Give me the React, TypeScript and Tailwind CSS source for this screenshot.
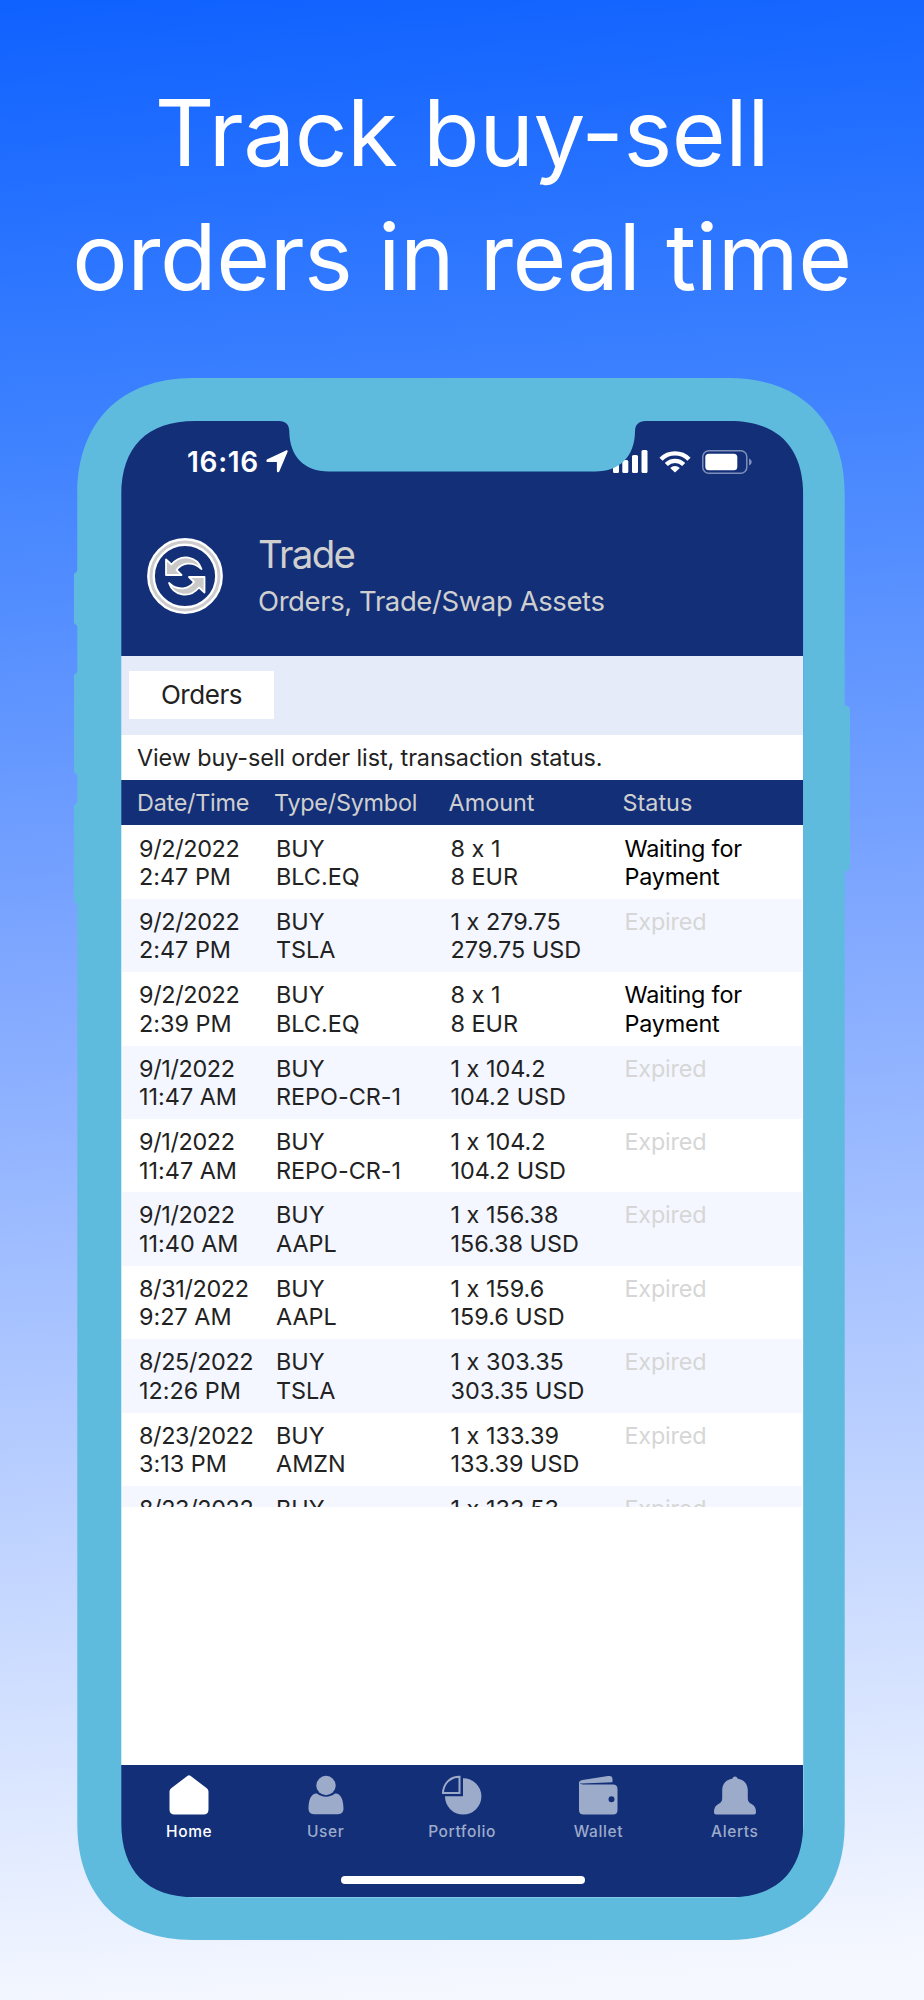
import React from 'react';

type Order = {
  date: string;
  time: string;
  side: string;
  symbol: string;
  qty: string;
  total: string;
  status: string;
};

const orders: Order[] = [
  { date: '9/2/2022', time: '2:47 PM', side: 'BUY', symbol: 'BLC.EQ', qty: '8 x 1', total: '8 EUR', status: 'Waiting for Payment' },
  { date: '9/2/2022', time: '2:47 PM', side: 'BUY', symbol: 'TSLA', qty: '1 x 279.75', total: '279.75 USD', status: 'Expired' },
  { date: '9/2/2022', time: '2:39 PM', side: 'BUY', symbol: 'BLC.EQ', qty: '8 x 1', total: '8 EUR', status: 'Waiting for Payment' },
  { date: '9/1/2022', time: '11:47 AM', side: 'BUY', symbol: 'REPO-CR-1', qty: '1 x 104.2', total: '104.2 USD', status: 'Expired' },
  { date: '9/1/2022', time: '11:47 AM', side: 'BUY', symbol: 'REPO-CR-1', qty: '1 x 104.2', total: '104.2 USD', status: 'Expired' },
  { date: '9/1/2022', time: '11:40 AM', side: 'BUY', symbol: 'AAPL', qty: '1 x 156.38', total: '156.38 USD', status: 'Expired' },
  { date: '8/31/2022', time: '9:27 AM', side: 'BUY', symbol: 'AAPL', qty: '1 x 159.6', total: '159.6 USD', status: 'Expired' },
  { date: '8/25/2022', time: '12:26 PM', side: 'BUY', symbol: 'TSLA', qty: '1 x 303.35', total: '303.35 USD', status: 'Expired' },
  { date: '8/23/2022', time: '3:13 PM', side: 'BUY', symbol: 'AMZN', qty: '1 x 133.39', total: '133.39 USD', status: 'Expired' },
  { date: '8/23/2022', time: '', side: 'BUY', symbol: '', qty: '1 x 133.53', total: '', status: 'Expired' },
];

const columns = 'grid grid-cols-[137px_174.5px_174px_1fr]';

/* Device shell: outer body with side buttons, and a screen cut-out with the notch. */
function PhoneFrame() {
  return (
    <svg className="pointer-events-none absolute -left-[5px] top-0" width="780" height="1562" viewBox="72 378 780 1562" aria-hidden="true">
      <g fill="#5fbbdd">
        <path d="M78 570.5 74 574v49l4 3.500zM78 671.500 74 675v97l4 3.500zM78 802 74 805.500v96l4 3.500z" />
        <path d="M844 705.500h1.500q4.500.5 4.500 5v156q0 4.500-4.500 5H844z" />
        <path
          fillRule="evenodd"
          d="M77.300 494C77.300 422 121 378 193 378H729C801 378 844.700 422 844.700 494V1824C844.700 1896 801 1940 729 1940H193C121 1940 77.300 1896 77.300 1824Z
             M121.300 495C121.300 447 147 421 195 421H279C285.500 421 289.300 424.500 289.300 431.500C289.500 456 304 471.500 329 471.500H595C620 471.500 634.800 456 635 431.500C635 424.500 639 421 645.500 421H729.500C777.500 421 803.300 447 803.300 495V1823C803.300 1871 777.500 1897.300 729.500 1897.300H195C147 1897.300 121.300 1871 121.300 1823Z"
        />
      </g>
    </svg>
  );
}

function StatusBar() {
  return (
    <div className="flex h-[81px] items-center text-white">
      <span className="ml-[66px] w-[76px] text-[28px] font-semibold leading-none tracking-[0.7px]">16:16</span>
      <svg className="ml-[3px]" width="22" height="23" viewBox="0 0 22 23" fill="currentColor" aria-hidden="true">
        <path d="M20 .5c1.200-.5 2 .4 1.500 1.600L13.400 21.300c-.6 1.400-2.500 1.200-2.500-.4V12H1.800C.2 12-.1 10 1.300 9.300z" />
      </svg>
      <svg className="ml-[325px]" width="35" height="23" viewBox="0 0 35 23" fill="currentColor" aria-hidden="true">
        <rect x="0" y="14" width="6" height="9" rx="1.500" />
        <rect x="9.300" y="10" width="6" height="13" rx="1.500" />
        <rect x="19" y="5" width="6" height="18" rx="1.500" />
        <rect x="28.500" y="0" width="6" height="23" rx="1.500" />
      </svg>
      <svg className="ml-[11px]" width="32" height="23" viewBox="0 0 32 23" aria-hidden="true">
        <g fill="none" stroke="currentColor" strokeWidth="4.400">
          <path d="M2 9.200a19.800 19.800 0 0 1 28 0" />
          <path d="M7.300 14.500a12.300 12.300 0 0 1 17.400 0" />
        </g>
        <path fill="currentColor" d="M16 22.600 11.200 18a6.900 6.900 0 0 1 9.600 0z" />
      </svg>
      <svg className="ml-[11px]" width="50" height="24" viewBox="0 0 50 24" aria-hidden="true">
        <rect x=".8" y=".8" width="44" height="22.400" rx="6" fill="none" stroke="#7f8fbb" strokeWidth="1.500" />
        <rect x="3.300" y="3.800" width="32" height="16.400" rx="3.500" fill="#fff" />
        <path d="M47 8.500q2.800 1 2.800 3.500T47 15.500z" fill="#7f8fbb" />
      </svg>
    </div>
  );
}

function SwapIcon() {
  return (
    <svg width="80" height="80" viewBox="0 0 80 80" aria-hidden="true">
      <circle cx="40" cy="40" r="34" fill="none" stroke="#fff" strokeWidth="7.800" />
      <circle cx="40" cy="40" r="34" fill="none" stroke="#cdcdcd" strokeWidth="3" />
      <g fill="#c9c9c9" stroke="#fff" strokeWidth="1.800" strokeLinejoin="round">
        <path d="M21 23.500V39h15.500l-5-5C36 27.500 47 24 56.500 33 52 20 36 17 26.500 28.500z" />
        <path d="M59.500 56.500V41H44l5 5C44.500 52.500 33.500 56 24 47 28.500 60 44.500 63 54 51.500z" />
      </g>
    </svg>
  );
}

function Header() {
  return (
    <header className="flex h-[153.500px] pt-[29px]">
      <div className="ml-[24px] mt-[5px]">
        <SwapIcon />
      </div>
      <div className="ml-[33px] text-[#cfcfcf]">
        <h2 className="text-[38.500px] leading-[46px] tracking-[-1.7px]">Trade</h2>
        <p className="mt-[4px] text-[27.500px] leading-[40px] tracking-[-0.400px]">Orders, Trade/Swap Assets</p>
      </div>
    </header>
  );
}

function OrderRow({ order, shaded }: { order: Order; shaded: boolean }) {
  const expired = order.status === 'Expired';
  return (
    <div className={`${columns} h-[73.375px] shrink-0 pl-[17px] pt-[9px] ${shaded ? 'bg-[#f4f7ff]' : 'bg-white'}`}>
      <div>
        <span className="tracking-[-0.35px]">{order.date}</span>
        <br />
        {order.time}
      </div>
      <div>{order.side}<br />{order.symbol}</div>
      <div>{order.qty}<br />{order.total}</div>
      <div className={`w-[130px] tracking-[-0.2px] ${expired ? 'text-[#d6d6d6]' : 'text-black'}`}>{order.status}</div>
    </div>
  );
}

const tabs = [
  {
    label: 'Home',
    icon: <path d="M18.300 1q1.700-1.300 3.400 0L37.800 13.200q1.700 1.300 1.700 3.300V34.500q0 5-5 5h-29q-5 0-5-5V16.500q0-2 1.700-3.300z" />,
  },
  {
    label: 'User',
    icon: (
      <>
        <circle cx="20" cy="10.500" r="9.700" />
        <path d="M11 18.500c5 4.200 13 4.200 18 0 6-.5 8.500 7 8.500 15 0 3.500-2 5.700-5.500 5.700H8c-3.500 0-5.500-2.200-5.500-5.700 0-8 2.500-15.500 8.500-15z" />
      </>
    ),
  },
  {
    label: 'Portfolio',
    icon: (
      <>
        <path d="M17.500 1.800v16.300H1C1.300 8.500 8 1.800 17.500 1.800z" fill="none" stroke="currentColor" strokeWidth="2" />
        <path d="M21 3.200a18.200 18.200 0 1 1-18 18h18z" />
      </>
    ),
  },
  {
    label: 'Wallet',
    icon: (
      <>
        <path d="M1 8Q1 5.500 4.500 5L30 1q4.500-.7 4.500 3v3.200L3.500 8.500z" />
        <path fillRule="evenodd" d="M1 7q1.500 2.500 4 2.500H35q4.500 0 4.500 4.500v21q0 4.500-4.500 4.500H5.500Q1 39.500 1 35zM33.500 21.200a3 3 0 1 0 0 6 3 3 0 0 0 0-6z" />
      </>
    ),
  },
  {
    label: 'Alerts',
    icon: (
      <path d="M17.500 3.500a2.600 2.600 0 0 1 5 0C29 5 32.800 8.500 32.800 15.500V23c0 3.500 1.200 4.500 4.500 6.500 2.500 1.500 3.700 4 3.700 7.500 0 1.500-.6 2.500-2 2.500H1c-1.400 0-2-1-2-2.500 0-3.500 1.200-6 3.700-7.500C6 27.500 7.200 26.500 7.200 23v-7.500C7.200 8.500 11 5 17.500 3.500z" />
    ),
  },
];

function TabBar() {
  return (
    <nav className="flex h-[132.300px] flex-col bg-[#132f78]">
      <div className="grid grid-cols-5 pt-[10.500px]">
        {tabs.map((tab, i) => (
          <div key={tab.label} className={`flex flex-col items-center ${i === 0 ? 'text-white' : 'text-[#9dabcb]'}`}>
            <svg width="40" height="40" viewBox="0 0 40 40" fill="currentColor" overflow="visible" aria-hidden="true">
              {tab.icon}
            </svg>
            <span className="mt-[7px] text-[15.500px] font-medium leading-[20px] tracking-[0.6px]">{tab.label}</span>
          </div>
        ))}
      </div>
      <div className="ml-[219.500px] mt-[34px] h-[8px] w-[244px] rounded-full bg-white" />
    </nav>
  );
}

export default function App() {
  return (
    <main className="flex h-[2000px] w-[924px] flex-col items-center overflow-hidden bg-[linear-gradient(176deg,#0f61ff_0%,#3b80ff_20%,#82a9ff_48%,#f5f8ff_98%)] font-[Inter,sans-serif] [font-feature-settings:'calt'_0]">
      <h1 className="mt-[70px] whitespace-nowrap text-center text-[92.500px] leading-[124px] tracking-[-0.450px] text-white">
        Track buy-sell
        <br />
        orders in real time
      </h1>
      <div className="relative mt-[60px] h-[1562px] w-[770px]">
        <div className="ml-[44px] flex h-[1519px] w-[682px] flex-col overflow-hidden pt-[43px]">
          <div className="flex h-[1477px] flex-col overflow-hidden rounded-[60px] bg-white">
            <div className="bg-[#132f78]">
              <StatusBar />
              <Header />
            </div>
            <div className="flex h-[79.500px] items-center bg-[#e6ebfa] pl-[8px]">
              <button className="h-[48px] w-[145px] bg-white text-[26px] leading-[48px] tracking-[-0.450px] text-[#222]">Orders</button>
            </div>
            <p className="h-[44.500px] pl-[16px] text-[23.400px] leading-[45px] tracking-[-0.1px] text-[#222]">View buy-sell order list, transaction status.</p>
            <div className={`${columns} h-[45px] bg-[#132f78] pl-[16px] text-[23.400px] leading-[45px] tracking-[-0.250px] text-[#cfcfcf]`}>
              <span>Date/Time</span>
              <span>Type/Symbol</span>
              <span className="tracking-normal">Amount</span>
              <span className="tracking-normal">Status</span>
            </div>
            <div className="mx-px flex h-[682px] flex-col overflow-hidden pt-px text-[23.400px] leading-[28.600px] text-[#222]">
              {orders.map((order, i) => (
                <OrderRow key={i} order={order} shaded={i % 2 === 1} />
              ))}
            </div>
            <div className="flex-1" />
            <TabBar />
          </div>
        </div>
        <PhoneFrame />
      </div>
    </main>
  );
}
